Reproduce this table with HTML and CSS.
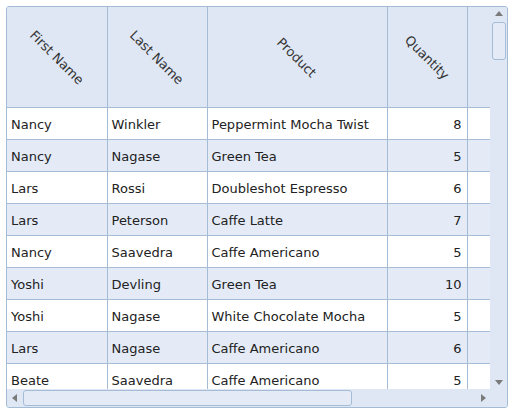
FILE: index.html
```html
<!DOCTYPE html>
<html>
<head>
<meta charset="utf-8">
<link rel="stylesheet" href="styles.css">
</head>
<body>
<div class="grid">
  <div class="viewport">
    <table class="data">
      <colgroup>
        <col class="c1"><col class="c2"><col class="c3"><col class="c4"><col class="c5">
      </colgroup>
      <thead>
        <tr>
          <th><span class="rot">First Name</span></th>
          <th><span class="rot">Last Name</span></th>
          <th><span class="rot">Product</span></th>
          <th><span class="rot">Quantity</span></th>
          <th></th>
        </tr>
      </thead>
      <tbody>
        <tr><td>Nancy</td><td>Winkler</td><td>Peppermint Mocha Twist</td><td class="num">8</td><td></td></tr>
        <tr class="alt"><td>Nancy</td><td>Nagase</td><td>Green Tea</td><td class="num">5</td><td></td></tr>
        <tr><td>Lars</td><td>Rossi</td><td>Doubleshot Espresso</td><td class="num">6</td><td></td></tr>
        <tr class="alt"><td>Lars</td><td>Peterson</td><td>Caffe Latte</td><td class="num">7</td><td></td></tr>
        <tr><td>Nancy</td><td>Saavedra</td><td>Caffe Americano</td><td class="num">5</td><td></td></tr>
        <tr class="alt"><td>Yoshi</td><td>Devling</td><td>Green Tea</td><td class="num">10</td><td></td></tr>
        <tr><td>Yoshi</td><td>Nagase</td><td>White Chocolate Mocha</td><td class="num">5</td><td></td></tr>
        <tr class="alt"><td>Lars</td><td>Nagase</td><td>Caffe Americano</td><td class="num">6</td><td></td></tr>
        <tr><td>Beate</td><td>Saavedra</td><td>Caffe Americano</td><td class="num">5</td><td></td></tr>
      </tbody>
    </table>
  </div>
  <div class="vscroll">
    <span class="arrow up"></span>
    <div class="track"><div class="vthumb"></div></div>
    <span class="arrow down"></span>
  </div>
  <div class="hscroll">
    <span class="arrow left"></span>
    <div class="htrack"><div class="hthumb"></div></div>
    <span class="arrow right"></span>
  </div>
  <div class="corner"></div>
</div>
</body>
</html>
```
FILE: styles.css
```css
html, body {
  margin: 0;
  padding: 0;
  background: #ffffff;
}
body {
  padding: 6px;
  font-family: "DejaVu Sans", Verdana, sans-serif;
  font-size: 13px;
  color: #222;
}
.grid {
  width: 500px;
  height: 400px;
  border: 1px solid #a4bcd6;
  border-radius: 3px;
  background: #dfe7f5;
  display: grid;
  grid-template-columns: 483px 17px;
  grid-template-rows: 382px 18px;
  overflow: hidden;
}
.viewport {
  overflow: hidden;
  background: #dfe7f5;
}
.data {
  border-collapse: collapse;
  table-layout: fixed;
  width: 483px;
}
.c1 { width: 100px; }
.c2 { width: 100px; }
.c3 { width: 180px; }
.c4 { width: 80px; }
.c5 { width: 23px; }
.data th {
  height: 100px;
  padding: 0;
  background: #dfe7f5;
  border-right: 1px solid #a4bcd6;
  border-bottom: 1px solid #a4bcd6;
  font-weight: normal;
  text-align: center;
  vertical-align: middle;
  color: #333;
  overflow: visible;
}
.data th:last-child { border-right: none; }
.rot {
  display: inline-block;
  transform: rotate(45deg);
  white-space: nowrap;
}
.data td {
  height: 32px;
  padding: 1px 4px 0;
  border-right: 1px solid #a4bcd6;
  border-bottom: 1px solid #a4bcd6;
  background: #ffffff;
  white-space: nowrap;
  overflow: hidden;
  box-sizing: border-box;
}
.data tr.alt td { background: #e4ebf7; }
.data td:last-child { border-right: none; }
.data td.num { text-align: right; padding-right: 5px; }

.vscroll {
  grid-column: 2;
  grid-row: 1;
  display: flex;
  flex-direction: column;
  align-items: center;
  background: #dfe7f5;
}
.track {
  flex: 1;
  width: 100%;
  display: flex;
  justify-content: center;
}
.vthumb {
  width: 14px;
  height: 38px;
  margin-top: 2px;
  border: 1px solid #a4bcd6;
  border-radius: 3px;
  box-sizing: border-box;
  background: #e4ebf7;
}
.hscroll {
  grid-column: 1;
  grid-row: 2;
  display: flex;
  align-items: center;
  background: #dfe7f5;
}
.htrack {
  flex: 1;
  height: 100%;
  display: flex;
  align-items: center;
}
.hthumb {
  width: 329px;
  height: 16px;
  margin-left: 2px;
  border: 1px solid #a4bcd6;
  border-radius: 3px;
  box-sizing: border-box;
  background: #e4ebf7;
}
.corner {
  grid-column: 2;
  grid-row: 2;
  background: #dfe7f5;
}
.arrow {
  width: 0;
  height: 0;
  flex: none;
}
.arrow.up {
  margin: 4px 0 4px;
  border-left: 4px solid transparent;
  border-right: 4px solid transparent;
  border-bottom: 5px solid #7a7a7a;
}
.arrow.down {
  margin: 4px 0 4px;
  border-left: 4px solid transparent;
  border-right: 4px solid transparent;
  border-top: 5px solid #7a7a7a;
}
.arrow.left {
  margin: 0 4px 0 5px;
  border-top: 4px solid transparent;
  border-bottom: 4px solid transparent;
  border-right: 5px solid #7a7a7a;
}
.arrow.right {
  margin: 0 4px 0 4px;
  border-top: 4px solid transparent;
  border-bottom: 4px solid transparent;
  border-left: 5px solid #7a7a7a;
}
```
